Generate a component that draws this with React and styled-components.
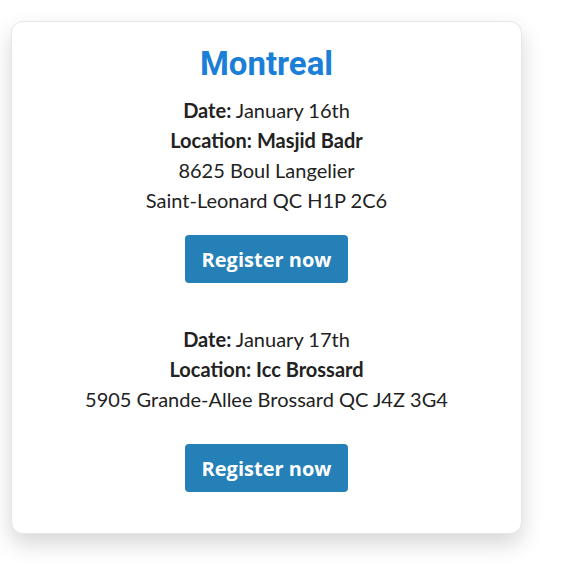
import React from 'react';
import styled, { createGlobalStyle } from 'styled-components';

const GlobalStyle = createGlobalStyle`
  body {
    margin: 0;
    background: #ffffff;
    font-family: Lato, 'Liberation Sans', sans-serif;
    color: #222;
  }
`;

const Page = styled.div`
  padding: 21px 0 40px 11px;
`;

const Card = styled.section`
  width: 511px;
  box-sizing: border-box;
  padding: 22px 20px 41px;
  background: #fff;
  border: 1px solid #e6e6e6;
  border-radius: 12px;
  box-shadow: 0 10px 22px rgba(0, 0, 0, 0.16);
  text-align: center;
`;

const City = styled.h2`
  margin: 0 0 11px;
  font-family: Roboto, 'Liberation Sans', sans-serif;
  font-size: 33px;
  line-height: 40px;
  font-weight: 700;
  color: #1b7fd7;
`;

const Event = styled.div`
  & + & {
    margin-top: 41px;
  }
`;

const Line = styled.p`
  margin: 0;
  font-size: 20px;
  line-height: 30px;
  font-weight: ${(p) => (p.$bold ? 700 : 400)};
`;

const Label = styled.strong`
  font-weight: 700;
`;

const Button = styled.button`
  display: inline-block;
  margin-top: ${(p) => p.$gap}px;
  width: 163px;
  height: 48px;
  border: none;
  border-radius: 4px;
  background: #2580b7;
  color: #fff;
  font-family: 'Open Sans', 'Liberation Sans', sans-serif;
  font-size: 20px;
  font-weight: 700;
  cursor: pointer;
`;

const events = [
  {
    date: 'January 16th',
    place: 'Masjid Badr',
    address: ['8625 Boul Langelier', 'Saint-Leonard QC H1P 2C6'],
    gap: 20,
  },
  {
    date: 'January 17th',
    place: 'Icc Brossard',
    address: ['5905 Grande-Allee Brossard QC J4Z 3G4'],
    gap: 30,
  },
];

export default function App() {
  return (
    <Page>
      <GlobalStyle />
      <Card>
        <City>Montreal</City>
        {events.map((ev) => (
          <Event key={ev.date}>
            <Line>
              <Label>Date:</Label> {ev.date}
            </Line>
            <Line $bold>Location: {ev.place}</Line>
            {ev.address.map((a) => (
              <Line key={a}>{a}</Line>
            ))}
            <Button $gap={ev.gap}>Register now</Button>
          </Event>
        ))}
      </Card>
    </Page>
  );
}
